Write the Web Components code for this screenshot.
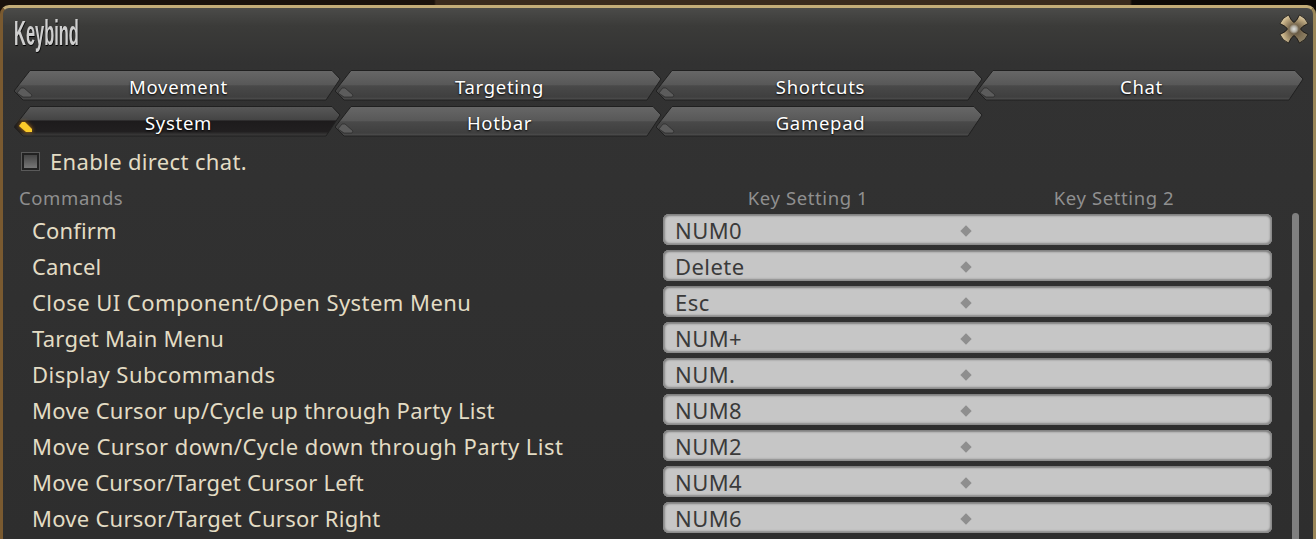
<!DOCTYPE html>
<html>
<head>
<meta charset="utf-8">
<style>
  html, body { margin: 0; height: 100%; overflow: hidden; }
  body { background: linear-gradient(90deg, #1a120c 0, #1a120c 434px, #3a2b1d 436px, #3a2b1d 1130px, #0e0a07 1132px); }
</style>
</head>
<body>
<kb-window title="Keybind">
  <kb-tabs>
    <kb-tab>Movement</kb-tab>
    <kb-tab>Targeting</kb-tab>
    <kb-tab>Shortcuts</kb-tab>
    <kb-tab>Chat</kb-tab>
    <kb-tab active>System</kb-tab>
    <kb-tab>Hotbar</kb-tab>
    <kb-tab>Gamepad</kb-tab>
  </kb-tabs>
  <kb-check>Enable direct chat.</kb-check>
  <kb-table>
    <kb-row style="--ls:.15px" name="Confirm" key="NUM0"></kb-row>
    <kb-row style="--ls:.15px" name="Cancel" key="Delete"></kb-row>
    <kb-row name="Close UI Component/Open System Menu" key="Esc"></kb-row>
    <kb-row style="--ls:.25px" name="Target Main Menu" key="NUM+"></kb-row>
    <kb-row name="Display Subcommands" key="NUM."></kb-row>
    <kb-row style="--ls:.3px" name="Move Cursor up/Cycle up through Party List" key="NUM8"></kb-row>
    <kb-row name="Move Cursor down/Cycle down through Party List" key="NUM2"></kb-row>
    <kb-row style="--ls:.2px" name="Move Cursor/Target Cursor Left" key="NUM4"></kb-row>
    <kb-row style="--ls:.25px" name="Move Cursor/Target Cursor Right" key="NUM6"></kb-row>
  </kb-table>
</kb-window>

<script>
const FONT = '"Noto Sans", "Open Sans", sans-serif';
const CROSS = "M0-6.5Q2.5-7.5 5.5-14 11.5-11.5 14-5.5 7.5-2.5 6.5 0 7.5 2.5 14 5.5 11.5 11.5 5.5 14 2.5 7.5 0 6.5-2.5 7.5-5.5 14-11.5 11.5-14 5.5-7.5 2.5-6.5 0-7.5-2.5-14-5.5-11.5-11.5-5.5-14-2.5-7.5 0-6.5Z";

class KbWindow extends HTMLElement {
  constructor() {
    super();
    this.attachShadow({ mode: "open" });
    this.shadowRoot.innerHTML = `
<style>
  :host {
    display: block;
    margin: 5px 0 0 0;
    height: 534px;
    box-sizing: border-box;
    border: 3px solid #7a5a30;
    border-top-color: #c4ad78;
    border-right-color: #9a8658;
    border-bottom: 0;
    border-radius: 9px 9px 0 0;
    background: linear-gradient(#4b4b49 0, #3b3b39 18px, #323232 55px, #2e2e2e 100%);
    overflow: hidden;
    font-family: ${FONT};
  }
  header {
    display: flex;
    justify-content: space-between;
    align-items: flex-start;
    height: 62px;
    padding: 0 3px 0 11px;
  }
  .title {
    font: bold 35px/44px "Liberation Sans", sans-serif;
    color: #cfcfcf;
    text-shadow: 1px 1px 1px #000;
    transform: scaleX(.47);
    transform-origin: left top;
    margin-top: 3px;
  }
  svg { display: block; margin-top: 5px; }
</style>
<header>
  <div class="title" id="t"></div>
  <svg width="32" height="32" viewBox="-16 -16 32 32">
    <defs>
      <radialGradient id="m" gradientUnits="userSpaceOnUse" cx="0" cy="0" r="17">
        <stop offset=".3" stop-color="#7d6c52"/>
        <stop offset=".7" stop-color="#c4ae84"/>
        <stop offset="1" stop-color="#f0e3bf"/>
      </radialGradient>
      <linearGradient id="s" x1="0" y1="0" x2="1" y2="1">
        <stop offset=".45" stop-color="#000" stop-opacity="0"/>
        <stop offset="1" stop-color="#000" stop-opacity=".5"/>
      </linearGradient>
      <radialGradient id="c">
        <stop offset="0" stop-color="#e0e0de"/>
        <stop offset=".55" stop-color="#b4b0a6"/>
        <stop offset="1" stop-color="#b4b0a6" stop-opacity="0"/>
      </radialGradient>
    </defs>
    <path d="${CROSS}" fill="url(#m)" stroke="#14100c" stroke-width=".8" stroke-linejoin="round"/>
    <path d="${CROSS}" fill="url(#s)"/>
    <circle r="5" fill="url(#c)"/>
  </svg>
</header>
<slot></slot>`;
  }
  connectedCallback() {
    this.shadowRoot.getElementById("t").textContent = this.getAttribute("title");
  }
}

class KbTabs extends HTMLElement {
  constructor() {
    super();
    this.attachShadow({ mode: "open" });
    this.shadowRoot.innerHTML = `
<style>
  :host {
    display: grid;
    grid-template-columns: repeat(4, 321px);
    grid-auto-rows: 36px;
    padding-left: 11px;
    height: 72px;
  }
</style>
<slot></slot>`;
  }
}

class KbTab extends HTMLElement {
  constructor() {
    super();
    this.attachShadow({ mode: "open" });
    this.shadowRoot.innerHTML = `
<style>
  :host {
    display: flex;
    position: relative;
    width: 327px;
    height: 30px;
    align-items: center;
    justify-content: center;
    padding: 2px 0 0 2px;
    box-sizing: border-box;
    color: #fff;
    font-size: 18.5px;
    letter-spacing: .7px;
    text-shadow: 0 1px 2px #000;
  }
  svg { position: absolute; left: 0; top: 0; }
  span { position: relative; }
</style>
<svg width="327" height="31" viewBox="0 0 327 31">
  <defs>
    <linearGradient id="on" x1="0" y1="0" x2="0" y2="1">
      <stop offset="0" stop-color="#585858"/>
      <stop offset=".44" stop-color="#454545"/>
      <stop offset=".5" stop-color="#1d1b1c"/>
      <stop offset=".85" stop-color="#211f20"/>
      <stop offset="1" stop-color="#414141"/>
    </linearGradient>
    <linearGradient id="off" x1="0" y1="0" x2="0" y2="1">
      <stop offset="0" stop-color="#676767"/>
      <stop offset=".48" stop-color="#585858"/>
      <stop offset=".52" stop-color="#494949"/>
      <stop offset=".9" stop-color="#3f3f3f"/>
      <stop offset="1" stop-color="#525252"/>
    </linearGradient>
  </defs>
  <path d="M0 21 16 .5H318L326 9 312 30H9Z" fill="url(#off)" stroke="#202020" stroke-width="1" id="shape"/>
  <path d="M3 23 7 18H10L18 25 17 27H9Z" fill="#5c5c5c" stroke="#2a2a2a" stroke-width=".7" id="lamp"/>
</svg>
<span><slot></slot></span>`;
  }
  connectedCallback() {
    if (this.hasAttribute("active")) {
      this.shadowRoot.getElementById("shape").setAttribute("fill", "url(#on)");
      const lamp = this.shadowRoot.getElementById("lamp");
      lamp.setAttribute("d", "M5 20 8 16 11 16 18 23 18 26 12 26Z");
      lamp.setAttribute("fill", "#fbcb2a");
      lamp.setAttribute("stroke", "none");
      lamp.style.filter = "drop-shadow(0 0 2px #c67a10)";
    }
  }
}

class KbCheck extends HTMLElement {
  constructor() {
    super();
    this.attachShadow({ mode: "open" });
    this.shadowRoot.innerHTML = `
<style>
  :host {
    display: flex;
    align-items: center;
    gap: 11px;
    height: 36px;
    padding: 0 0 0 19px;
    margin-top: 1px;
    color: #e3dcc4;
    font-size: 22px;
    letter-spacing: .35px;
  }
  i {
    display: block;
    width: 13px;
    height: 13px;
    border: 2px solid #222;
    outline: 1px solid #5a5a5a;
    background: linear-gradient(#454545, #777);
  }
</style>
<i></i><slot></slot>`;
  }
}

class KbTable extends HTMLElement {
  constructor() {
    super();
    this.attachShadow({ mode: "open" });
    this.shadowRoot.innerHTML = `
<style>
  :host {
    display: block;
    font-size: 18.5px;
    letter-spacing: .6px;
  }
  .head {
    display: grid;
    grid-template-columns: 660px 258px 354px;
    padding-left: 16px;
    height: 36px;
    align-items: center;
    color: #8f8f8f;
  }
  .head span:nth-child(n+2) { text-align: center; }
  .body { display: flex; }
  .rows { display: flex; flex-direction: column; gap: 6px; flex: 1; }
  .bar {
    width: 7px;
    margin: -2px 14px 0 20px;
    height: 400px;
    border-radius: 4px 4px 0 0;
    background: #808080;
  }
</style>
<div class="head"><span>Commands</span><span>Key Setting 1</span><span>Key Setting 2</span></div>
<div class="body">
  <div class="rows"><slot></slot></div>
  <div class="bar"></div>
</div>`;
  }
}

class KbRow extends HTMLElement {
  constructor() {
    super();
    this.attachShadow({ mode: "open" });
    this.shadowRoot.innerHTML = `
<style>
  :host {
    display: grid;
    grid-template-columns: 660px 1fr;
    grid-template-rows: 30px;
    height: 30px;
    align-items: center;
    font-size: 22px;
    letter-spacing: .45px;
  }
  .name { padding-left: 29px; color: #e3dcc4; white-space: nowrap; letter-spacing: var(--ls, .45px); }
  .field {
    position: relative;
    display: flex;
    align-items: center;
    height: 31px;
    align-self: end;
    box-sizing: border-box;
    padding-left: 12px;
    border-radius: 6px;
    background: #c6c6c6;
    box-shadow: inset 0 2px 2px #808080, inset 2px 0 2px #8c8c8c, inset -2px 0 2px #8c8c8c, inset 0 -2px 2px #8c8c8c;
    color: #3a3a3a;
  }
  .diamond {
    position: absolute;
    left: 299px;
    top: 13px;
    width: 8px;
    height: 8px;
    background: #8e8e8e;
    transform: rotate(45deg);
  }
</style>
<div class="name" id="n"></div>
<div class="field"><span id="k"></span><i class="diamond"></i></div>`;
  }
  connectedCallback() {
    this.shadowRoot.getElementById("n").textContent = this.getAttribute("name");
    this.shadowRoot.getElementById("k").textContent = this.getAttribute("key");
  }
}

customElements.define("kb-window", KbWindow);
customElements.define("kb-tabs", KbTabs);
customElements.define("kb-tab", KbTab);
customElements.define("kb-check", KbCheck);
customElements.define("kb-table", KbTable);
customElements.define("kb-row", KbRow);
</script>
</body>
</html>
